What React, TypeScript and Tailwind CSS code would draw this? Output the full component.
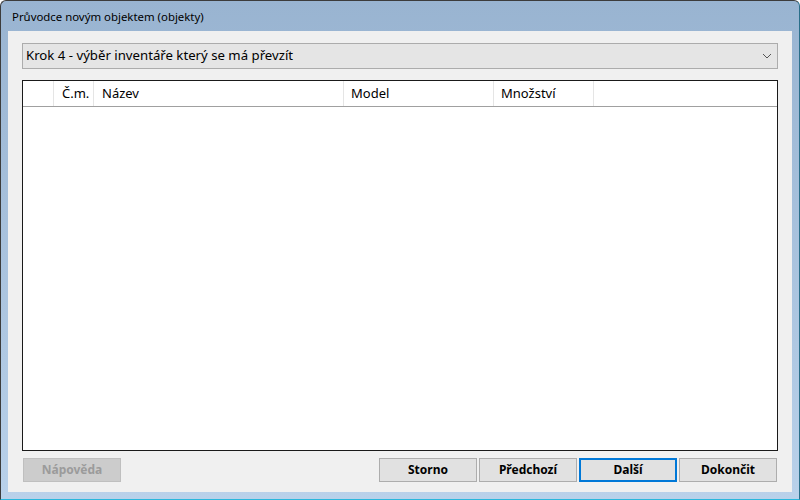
import React from "react";

const font = { fontFamily: '"Noto Sans", "Open Sans", sans-serif' };

function Btn({ label, disabled, focused }: { label: string; disabled?: boolean; focused?: boolean }) {
  return (
    <div
      className={
        "w-[98px] h-[24px] flex items-center justify-center text-[12px] font-bold " +
        (disabled
          ? "bg-[#cccccc] border border-[#bfbfbf] text-[#9b9b9b]"
          : focused
          ? "bg-[#e1e1e1] border-2 border-[#0078d7] text-black"
          : "bg-[#e1e1e1] border border-[#adadad] text-black")
      }
    >
      {label}
    </div>
  );
}

export default function App() {
  return (
    <div className="w-[800px] h-[500px] bg-white" style={font}>
      <div className="w-[800px] h-[500px] rounded-t-[6px] border border-[#3c3c3c] border-b-[#2ab7dc] border-r-[#2a6f8a] bg-gradient-to-b from-[#99b4d1] to-[#b9d1ea] flex flex-col overflow-hidden">
        <div className="h-[30px] flex items-center pl-[11px] pt-[2px] text-[11.4px] text-black shrink-0">
          Průvodce novým objektem (objekty)
        </div>
        <div className="mx-[7px] mb-[7px] flex-1 bg-[#f0f0f0] flex flex-col px-[14px] pt-[12px] pb-[10px]">
          <div className="h-[26px] bg-[#e5e5e5] border border-[#acacac] flex items-center justify-between pl-[3px] pr-[4px] text-[13.2px] text-black">
            <span>Krok 4 - výběr inventáře který se má převzít</span>
            <svg width="10" height="6" viewBox="0 0 10 6" className="mr-[1px]">
              <path d="M1 1 L5 5 L9 1" fill="none" stroke="#555" strokeWidth="1" />
            </svg>
          </div>
          <div className="mt-[11px] flex-1 bg-white border border-[#1a1a1a] flex flex-col">
            <div className="h-[26px] flex border-b border-[#a0a0a0] text-[13px] text-black">
              <div className="w-[31px] border-r border-[#e5e5e5]" />
              <div className="w-[40px] border-r border-[#e5e5e5] pl-[8px] flex items-center">Č.m.</div>
              <div className="w-[250px] border-r border-[#e5e5e5] pl-[8px] flex items-center">Název</div>
              <div className="w-[150px] border-r border-[#e5e5e5] pl-[7px] flex items-center">Model</div>
              <div className="w-[100px] border-r border-[#e5e5e5] pl-[7px] flex items-center">Množství</div>
              <div className="flex-1" />
            </div>
          </div>
          <div className="mt-[7px] px-[1px] flex items-center">
            <Btn label="Nápověda" disabled />
            <div className="flex-1" />
            <div className="flex gap-[2px]">
              <Btn label="Storno" />
              <Btn label="Předchozí" />
              <Btn label="Další" focused />
              <Btn label="Dokončit" />
            </div>
          </div>
        </div>
      </div>
    </div>
  );
}
